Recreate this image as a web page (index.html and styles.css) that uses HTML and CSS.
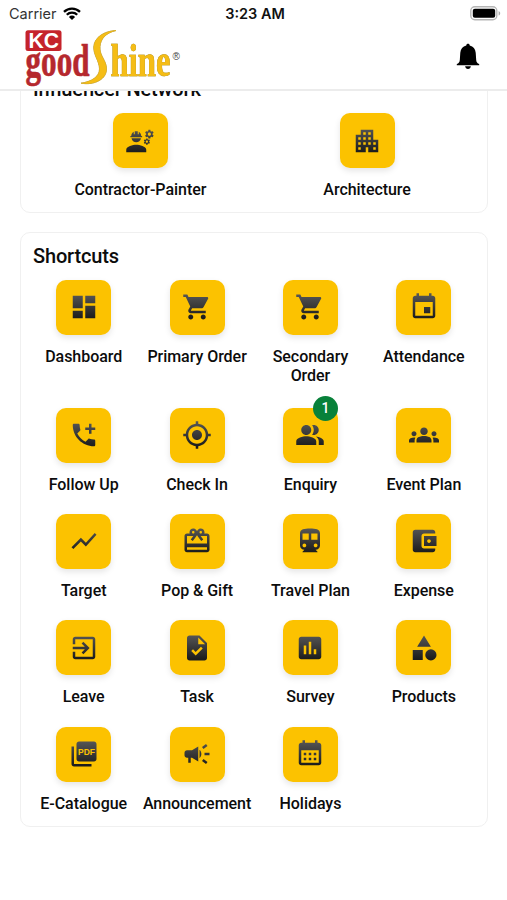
FILE: index.html
```
<!DOCTYPE html>
<html lang="en">
<head>
    <meta charset="UTF-8">
    <meta name="viewport" content="width=device-width, initial-scale=1.0">
    <title>KC Good Shine</title>
    <link rel="stylesheet" href="styles.css">
</head>
<body>
    <!-- shared icon gradient -->
    <svg class="defs" width="0" height="0">
        <defs>
            <linearGradient id="ink" gradientUnits="userSpaceOnUse" x1="0" y1="2" x2="0" y2="21">
                <stop offset="0" stop-color="#555"/>
                <stop offset="1" stop-color="#1c1c1c"/>
            </linearGradient>
        </defs>
    </svg>

    <header class="header">
        <div class="status">
            <div class="carrier">
                <span>Carrier</span>
                <svg class="wifi" viewBox="0 0 18 13">
                    <path d="M1 4.9a11.4 11.4 0 0 1 16 0M3.8 7.8a7.4 7.4 0 0 1 10.4 0" fill="none" stroke="#000" stroke-width="2.3"/>
                    <path d="M9 13L5.9 9.9a4.4 4.4 0 0 1 6.2 0z"/>
                </svg>
            </div>
            <span class="time">3:23 AM</span>
            <svg class="battery" viewBox="0 0 31 15">
                <rect x=".8" y=".8" width="26" height="13" rx="4" fill="#fff" stroke="#b5b5b5" stroke-width="1.4"/>
                <rect x="2.8" y="2.8" width="22.4" height="9" rx="2"/>
                <path d="M28.6 5v4.6c1-.4 1.6-1.3 1.6-2.3s-.6-1.9-1.6-2.3z" fill="#aaa"/>
            </svg>
        </div>
        <div class="topbar">
            <svg class="logo" viewBox="24 28 160 60">
                <rect x="25.5" y="30.3" width="36" height="20.7" rx="2.5" fill="#c5232b"/>
                <text class="logo-kc" x="28.5" y="48.2" textLength="30.5" lengthAdjust="spacingAndGlyphs">KC</text>
                <text class="logo-serif logo-good" x="25.5" y="76" textLength="64" lengthAdjust="spacingAndGlyphs">good</text>
                <path class="logo-gold" d="M116 30.500C104 31 94.500 37.500 93.800 46.500C93.200 55 99.500 61 99.500 69C99.500 76.500 92 81.500 81 83.200C95 85.500 106.500 79 106.500 69C106.500 60 99.200 56 100 46.500C100.600 38.500 106 33 116 30.500Z"/>
                <text class="logo-serif logo-gold" x="110.500" y="76" textLength="60" lengthAdjust="spacingAndGlyphs">hine</text>
                <text class="logo-mark" x="172.500" y="59.500">®</text>
            </svg>
            <svg class="bell" viewBox="0 0 24 28">
                <path d="M12 .8c1 0 1.800.7 1.800 1.700 3.700.9 5.900 3.700 6.200 7.700l.5 7.300c.2 2.300 1.100 3.300 3.100 4.400v1.300H.4v-1.300c2-1.100 2.900-2.100 3.100-4.400l.5-7.300c.3-4 2.500-6.800 6.200-7.700 0-1 .8-1.700 1.800-1.700z"/>
                <path d="M9 24.200h6c-.2 1.700-1.400 2.800-3 2.800s-2.800-1.100-3-2.800z"/>
            </svg>
        </div>
    </header>

    <main class="content">
        <section class="card">
            <h2 class="card-title">Influencer Network</h2>
            <div class="grid grid-two">
                <div class="item">
                    <div class="tile"><svg class="icon" viewBox="0 0 24 24"><path d="M9 15c-2.670 0-8 1.340-8 4v2h16v-2c0-2.660-5.330-4-8-4zM4.300 9V8H5c0-1.500.8-2.750 2-3.450V6.500h.8V4.150h2.400V6.500h.8V4.550c1.200.7 2 1.950 2 3.450h.7v1zM5.200 9.800h7.600C12.400 11.700 10.900 13 9 13s-3.400-1.300-3.800-3.200zM21.980 6.230l.93-.83-.75-1.300-1.190.39c-.14-.11-.3-.2-.47-.27L20.250 3h-1.500l-.25 1.220c-.17.07-.33.16-.48.27l-1.180-.39-.75 1.300.93.83c-.02.17-.02.35 0 .52l-.93.85.75 1.300 1.200-.38c.13.1.28.18.43.25l.28 1.230h1.500l.27-1.220c.16-.07.3-.15.44-.25l1.190.38.75-1.300-.93-.85c.03-.19.02-.36.01-.53zM19.500 7.750c-.69 0-1.250-.56-1.250-1.250s.56-1.250 1.250-1.250 1.250.56 1.250 1.250-.56 1.250-1.250 1.250zM19.400 10.790l-.85.28c-.1-.08-.21-.14-.33-.19l-.18-.88h-1.070l-.18.87c-.12.05-.24.12-.34.19l-.84-.28-.54.93.66.59c-.01.13-.01.25 0 .37l-.66.61.54.93.86-.27c.1.07.2.13.31.18l.18.88h1.070l.19-.87c.11-.05.22-.11.32-.18l.85.27.54-.93-.66-.61c.01-.13.01-.25 0-.37l.66-.59-.53-.93zm-1.900 2.600c-.49 0-.89-.4-.89-.89s.4-.89.89-.89.89.4.89.89-.4.89-.89.89z"/></svg></div>
                    <span class="label">Contractor-Painter</span>
                </div>
                <div class="item">
                    <div class="tile"><svg class="icon" viewBox="0 0 24 24"><path d="M17 11V3H7v4H3v14h8v-4h2v4h8V11h-4zM7 19H5v-2h2v2zm0-4H5v-2h2v2zm0-4H5V9h2v2zm4 4H9v-2h2v2zm0-4H9V9h2v2zm0-4H9V5h2v2zm4 8h-2v-2h2v2zm0-4h-2V9h2v2zm0-4h-2V5h2v2zm4 12h-2v-2h2v2zm0-4h-2v-2h2v2z"/></svg></div>
                    <span class="label">Architecture</span>
                </div>
            </div>
        </section>

        <section class="card">
            <h2 class="card-title">Shortcuts</h2>
            <div class="grid">
                <div class="item">
                    <div class="tile"><svg class="icon" viewBox="0 0 24 24"><path d="M3 13h8V3H3v10zm0 8h8v-6H3v6zm10 0h8V11h-8v10zm0-18v6h8V3h-8z"/></svg></div>
                    <span class="label">Dashboard</span>
                </div>
                <div class="item">
                    <div class="tile"><svg class="icon" viewBox="0 0 24 24"><path d="M7 18c-1.100 0-1.990.9-1.990 2S5.900 22 7 22s2-.9 2-2-.9-2-2-2zM1 2v2h2l3.600 7.590-1.350 2.450c-.16.28-.25.61-.25.96 0 1.100.9 2 2 2h12v-2H7.420c-.14 0-.25-.11-.25-.25l.03-.12.9-1.630h7.450c.75 0 1.410-.41 1.750-1.030l3.580-6.490c.08-.14.12-.31.12-.48 0-.55-.45-1-1-1H5.210l-.94-2H1zm16 16c-1.100 0-1.990.9-1.990 2s.89 2 1.990 2 2-.9 2-2-.9-2-2-2z"/></svg></div>
                    <span class="label">Primary Order</span>
                </div>
                <div class="item">
                    <div class="tile"><svg class="icon" viewBox="0 0 24 24"><path d="M7 18c-1.100 0-1.990.9-1.990 2S5.900 22 7 22s2-.9 2-2-.9-2-2-2zM1 2v2h2l3.600 7.590-1.350 2.450c-.16.28-.25.61-.25.96 0 1.100.9 2 2 2h12v-2H7.420c-.14 0-.25-.11-.25-.25l.03-.12.9-1.630h7.450c.75 0 1.410-.41 1.750-1.030l3.580-6.490c.08-.14.12-.31.12-.48 0-.55-.45-1-1-1H5.210l-.94-2H1zm16 16c-1.100 0-1.990.9-1.990 2s.89 2 1.990 2 2-.9 2-2-.9-2-2-2z"/></svg></div>
                    <span class="label label-wrap">Secondary<br>Order</span>
                </div>
                <div class="item">
                    <div class="tile"><svg class="icon" viewBox="0 0 24 24"><path d="M17 12h-5v5h5v-5zM16 1v2H8V1H6v2H5c-1.110 0-1.990.9-1.990 2L3 19c0 1.100.89 2 2 2h14c1.100 0 2-.9 2-2V5c0-1.100-.9-2-2-2h-1V1h-2zm3 18H5V8h14v11z"/></svg></div>
                    <span class="label">Attendance</span>
                </div>

                <div class="item">
                    <div class="tile"><svg class="icon" viewBox="0 0 24 24"><path d="M20 15.500c-1.250 0-2.450-.2-3.570-.57-.35-.11-.74-.03-1.020.24l-2.200 2.200c-2.830-1.440-5.150-3.750-6.590-6.590l2.200-2.210c.28-.26.36-.65.25-1C8.700 6.450 8.500 5.250 8.500 4c0-.55-.45-1-1-1H4c-.55 0-1 .45-1 1 0 9.390 7.610 17 17 17 .55 0 1-.45 1-1v-3.500c0-.55-.45-1-1-1zM21 6h-3V3h-2v3h-3v2h3v3h2V8h3z"/></svg></div>
                    <span class="label">Follow Up</span>
                </div>
                <div class="item">
                    <div class="tile"><svg class="icon" viewBox="0 0 24 24"><path d="M12 8c-2.210 0-4 1.790-4 4s1.790 4 4 4 4-1.790 4-4-1.790-4-4-4zm8.940 3c-.46-4.170-3.770-7.480-7.940-7.940V1h-2v2.060C6.830 3.520 3.520 6.830 3.060 11H1v2h2.060c.46 4.170 3.770 7.480 7.940 7.940V23h2v-2.060c4.170-.46 7.480-3.770 7.940-7.940H23v-2h-2.060zM12 19c-3.870 0-7-3.130-7-7s3.130-7 7-7 7 3.130 7 7-3.130 7-7 7z"/></svg></div>
                    <span class="label">Check In</span>
                </div>
                <div class="item">
                    <div class="tile">
                        <svg class="icon" viewBox="0 0 24 24"><path d="M16.670 13.130C18.040 14.060 19 15.320 19 17v3h4v-3c0-2.180-3.570-3.470-6.330-3.870zM15 12c2.210 0 4-1.790 4-4s-1.790-4-4-4c-.47 0-.91.1-1.330.24C14.500 5.270 15 6.580 15 8s-.5 2.730-1.330 3.760c.42.14.86.24 1.330.24zM9 12c2.210 0 4-1.790 4-4s-1.790-4-4-4-4 1.790-4 4 1.790 4 4 4zm0 1c-2.670 0-8 1.340-8 4v3h16v-3c0-2.660-5.330-4-8-4z"/></svg>
                        <span class="badge">1</span>
                    </div>
                    <span class="label">Enquiry</span>
                </div>
                <div class="item">
                    <div class="tile"><svg class="icon" viewBox="0 0 24 24"><path d="M12 12.750c1.630 0 3.070.39 4.240.9 1.080.48 1.760 1.560 1.760 2.730V18H6v-1.610c0-1.180.68-2.260 1.760-2.730 1.170-.52 2.610-.91 4.240-.91zM4 13c1.100 0 2-.9 2-2s-.9-2-2-2-2 .9-2 2 .9 2 2 2zm1.130 1.100c-.37-.06-.74-.1-1.130-.1-.99 0-1.930.21-2.780.58C.48 14.900 0 15.620 0 16.430V18h4.500v-1.610c0-.83.23-1.610.63-2.290zM20 13c1.100 0 2-.9 2-2s-.9-2-2-2-2 .9-2 2 .9 2 2 2zm4 3.430c0-.81-.48-1.530-1.220-1.850-.85-.37-1.790-.58-2.780-.58-.39 0-.76.04-1.130.1.4.68.63 1.460.63 2.290V18H24v-1.570zM12 6c1.660 0 3 1.340 3 3s-1.340 3-3 3-3-1.340-3-3 1.340-3 3-3z"/></svg></div>
                    <span class="label">Event Plan</span>
                </div>

                <div class="item">
                    <div class="tile"><svg class="icon" viewBox="0 0 24 24"><path d="M3.500 18.490l6-6.010 4 4L22 6.920l-1.410-1.410-7.090 7.970-4-4L2 16.990z"/></svg></div>
                    <span class="label">Target</span>
                </div>
                <div class="item">
                    <div class="tile"><svg class="icon" viewBox="0 0 24 24"><path d="M20 6h-2.180c.11-.31.18-.65.18-1 0-1.660-1.340-3-3-3-1.050 0-1.960.54-2.500 1.350l-.5.67-.5-.68C10.960 2.540 10.050 2 9 2 7.340 2 6 3.340 6 5c0 .35.07.69.18 1H4c-1.110 0-1.990.89-1.990 2L2 19c0 1.110.89 2 2 2h16c1.110 0 2-.89 2-2V8c0-1.110-.89-2-2-2zm-5-2c.55 0 1 .45 1 1s-.45 1-1 1-1-.45-1-1 .45-1 1-1zM9 4c.55 0 1 .45 1 1s-.45 1-1 1-1-.45-1-1 .45-1 1-1zm11 15H4v-2h16v2zm0-5H4V8h5.080L7 10.830 8.620 12 11 8.760l1-1.360 1 1.360L15.380 12 17 10.830 14.920 8H20v6z"/></svg></div>
                    <span class="label">Pop &amp; Gift</span>
                </div>
                <div class="item">
                    <div class="tile"><svg class="icon" viewBox="0 0 24 24"><path d="M12 2c-4.420 0-8 .5-8 4v9.500C4 17.430 5.570 19 7.500 19L6 20.500v.5h12v-.5L16.500 19c1.930 0 3.500-1.570 3.500-3.500V6c0-3.500-3.580-4-8-4zM7.500 17c-.83 0-1.500-.67-1.500-1.500S6.670 14 7.500 14s1.500.67 1.500 1.500S8.330 17 7.500 17zm3.500-6H6V6h5v5zm5.500 6c-.83 0-1.500-.67-1.500-1.500s.67-1.500 1.500-1.500 1.500.67 1.500 1.500-.67 1.500-1.500 1.500zm1.500-6h-5V6h5v5z"/></svg></div>
                    <span class="label">Travel Plan</span>
                </div>
                <div class="item">
                    <div class="tile"><svg class="icon" viewBox="0 0 24 24"><path d="M21 18v1c0 1.100-.9 2-2 2H5c-1.110 0-2-.9-2-2V5c0-1.100.89-2 2-2h14c1.100 0 2 .9 2 2v1h-9c-1.110 0-2 .9-2 2v8c0 1.100.89 2 2 2h9zm-9-2h10V8H12v8zm4-2.500c-.83 0-1.500-.67-1.500-1.500s.67-1.500 1.500-1.500 1.500.67 1.500 1.500-.67 1.500-1.500 1.500z"/></svg></div>
                    <span class="label">Expense</span>
                </div>

                <div class="item">
                    <div class="tile"><svg class="icon" viewBox="0 0 24 24"><path d="M10.090 15.590L11.500 17l5-5-5-5-1.410 1.410L12.670 11H3v2h9.670l-2.580 2.590zM19 3H5c-1.110 0-2 .9-2 2v4h2V5h14v14H5v-4H3v4c0 1.100.89 2 2 2h14c1.100 0 2-.9 2-2V5c0-1.100-.9-2-2-2z"/></svg></div>
                    <span class="label">Leave</span>
                </div>
                <div class="item">
                    <div class="tile"><svg class="icon" viewBox="0 0 24 24"><path d="M14 2H6c-1.100 0-1.990.9-1.990 2L4 20c0 1.100.89 2 1.990 2H18c1.100 0 2-.9 2-2V8l-6-6zm-3.060 16L7.400 14.460l1.410-1.410 2.120 2.120 4.240-4.240 1.410 1.410L10.940 18zM13 9V3.500L18.500 9H13z"/></svg></div>
                    <span class="label">Task</span>
                </div>
                <div class="item">
                    <div class="tile"><svg class="icon" viewBox="0 0 24 24"><path d="M19 3H5c-1.100 0-2 .9-2 2v14c0 1.100.9 2 2 2h14c1.100 0 2-.9 2-2V5c0-1.100-.9-2-2-2zM9 17H7v-7h2v7zm4 0h-2V7h2v10zm4 0h-2v-4h2v4z"/></svg></div>
                    <span class="label">Survey</span>
                </div>
                <div class="item">
                    <div class="tile"><svg class="icon" viewBox="0 0 24 24"><path d="M12 2l-5.500 9h11zM3 13.500h8v8H3z"/><circle cx="17.500" cy="17.500" r="4.500"/></svg></div>
                    <span class="label">Products</span>
                </div>

                <div class="item">
                    <div class="tile"><svg class="icon" viewBox="0 0 24 24"><path d="M20 2H8c-1.100 0-2 .9-2 2v12c0 1.100.9 2 2 2h12c1.100 0 2-.9 2-2V4c0-1.100-.9-2-2-2zM4 6H2v14c0 1.100.9 2 2 2h14v-2H4V6z"/><text class="pdf" x="7.200" y="13" textLength="13.600" lengthAdjust="spacingAndGlyphs">PDF</text></svg></div>
                    <span class="label">E-Catalogue</span>
                </div>
                <div class="item">
                    <div class="tile"><svg class="icon" viewBox="0 0 24 24"><path d="M18 11v2h4v-2h-4zm-2 6.610c.96.71 2.210 1.650 3.200 2.390.4-.53.8-1.070 1.200-1.600-.99-.74-2.240-1.680-3.200-2.400-.4.54-.8 1.080-1.200 1.610zM20.400 5.600c-.4-.53-.8-1.070-1.200-1.600-.99.74-2.240 1.680-3.200 2.400.4.53.8 1.070 1.200 1.600.96-.72 2.210-1.650 3.200-2.400zM4 9c-1.100 0-2 .9-2 2v2c0 1.100.9 2 2 2h1v4h2v-4h1l5 3V6L8 9H4zm11.500 3c0-1.330-.58-2.530-1.500-3.350v6.690c.92-.81 1.500-2.010 1.500-3.340z"/></svg></div>
                    <span class="label">Announcement</span>
                </div>
                <div class="item">
                    <div class="tile"><svg class="icon" viewBox="0 0 24 24"><path d="M19 3h-1V1h-2v2H8V1H6v2H5c-1.110 0-1.990.9-1.990 2L3 19c0 1.100.89 2 2 2h14c1.100 0 2-.9 2-2V5c0-1.100-.9-2-2-2zm0 16H5V9h14v10zM9 13H7v-2h2v2zm4 0h-2v-2h2v2zm4 0h-2v-2h2v2zm-8 4H7v-2h2v2zm4 0h-2v-2h2v2zm4 0h-2v-2h2v2z"/></svg></div>
                    <span class="label">Holidays</span>
                </div>
            </div>
        </section>
    </main>
</body>
</html>
```

FILE: styles.css
```
* { box-sizing: border-box; }
body { margin: 0; height: 900px; overflow: hidden; display: flex; flex-direction: column; background-color: #fff; color: #0c0c0c; font-family: Roboto, sans-serif; }
.defs { display: block; flex: none; }

.header { flex: none; height: 91px; border-bottom: 2px solid #ececec; }
.status { display: grid; grid-template-columns: 1fr auto 1fr; align-items: center; height: 27px; padding: 0 6px 0 9px; font-family: Inter, sans-serif; font-size: 14.5px; color: #111; }
.carrier { display: flex; align-items: center; gap: 6px; color: #333; }
.wifi { width: 18px; height: 13px; margin-top: -1px; }
.time { font-weight: 600; }
.battery { justify-self: end; width: 31px; height: 15px; margin-top: -1px; }
.topbar { display: flex; justify-content: space-between; align-items: flex-start; padding: 1px 27px 0 24px; }
.logo { width: 160px; height: 60px; overflow: visible; }
.logo-kc { font: bold 21.5px "Liberation Sans", sans-serif; fill: #fff; }
.logo-serif { font: bold 47px "Liberation Serif", serif; }
.logo-good { fill: #b5282e; stroke: #b5282e; stroke-width: 0.7px; }
.logo-gold { fill: #f5bd16; stroke: #f5bd16; stroke-width: 0.6px; filter: drop-shadow(0.8px 0.6px 0.2px #77724d); }
.logo-mark { font: 10px "Liberation Sans", sans-serif; fill: #444; }
.bell { width: 24px; height: 27px; margin-top: 15px; }

.content { flex: 1; min-height: 0; overflow: hidden; padding: 0 19.5px 0 20px; }
.card { padding: 11.5px 6px 0; border: 1px solid #f0f0f0; border-radius: 10px; height: 595px; }
.card:first-child { height: 147.5px; margin: -25.5px 0 19px; }
.card-title { margin: 0 0 12px; padding-left: 6px; font-size: 20px; line-height: 23px; font-weight: 500; letter-spacing: -0.15px; }
.grid { display: grid; grid-template-columns: repeat(4, 1fr); row-gap: 20px; }
.grid-two { grid-template-columns: repeat(2, 1fr); }
.item { display: flex; flex-direction: column; align-items: center; gap: 12px; }
.tile { position: relative; display: flex; align-items: center; justify-content: center; width: 55px; height: 55px; border-radius: 10px; background-color: #fcc200; box-shadow: 0 3px 6px rgba(0,0,0,0.1); }
.icon { width: 30px; height: 30px; fill: url(#ink); }
.pdf { font: bold 7.5px "Liberation Sans", sans-serif; fill: #fcc200; }
.label { font-size: 16px; line-height: 19.3px; font-weight: 500; text-align: center; white-space: nowrap; letter-spacing: -0.04px; }
.label-wrap { padding-bottom: 2.6px; }
.badge { position: absolute; top: -12px; right: 0; width: 25px; height: 25px; border-radius: 50%; background-color: #08813a; color: #fff; font-size: 14px; line-height: 25px; font-weight: 500; text-align: center; }
```
